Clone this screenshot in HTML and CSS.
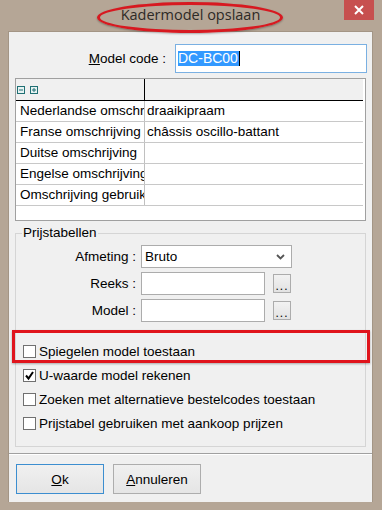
FILE: index.html
```html
<!DOCTYPE html>
<html lang="nl">
<head>
    <meta charset="UTF-8">
    <meta name="viewport" content="width=device-width, initial-scale=1.0">
    <title>Kadermodel opslaan</title>
    <link rel="stylesheet" href="styles.css">
</head>
<body>
    <div class="window">
        <div class="titlebar">
            <span></span>
            <span class="title">Kadermodel opslaan</span>
            <button class="close" aria-label="Sluiten">
                <svg width="10" height="10" viewBox="0 0 10 10"><path d="M1 1 L9 9 M9 1 L1 9" stroke="#fff" stroke-width="2"/></svg>
            </button>
        </div>
        <div class="client">
            <div class="code-row">
                <label class="code-label"><u>M</u>odel code :</label>
                <div class="code-input"><span class="selected">DC-BC00</span><span class="caret"></span></div>
            </div>

            <div class="grid">
                <div class="grid-head">
                    <div class="cell first">
                        <svg class="tree-icon" width="8" height="8" viewBox="0 0 8 8"><rect x="0.5" y="0.5" width="7" height="7" fill="#e6f2f2" stroke="#1f6f73"/><path d="M2 4 H6" stroke="#1f6f73"/></svg>
                        <svg class="tree-icon" width="8" height="8" viewBox="0 0 8 8"><rect x="0.5" y="0.5" width="7" height="7" fill="#e6f2f2" stroke="#1f6f73"/><path d="M2 4 H6 M4 2 V6" stroke="#1f6f73"/></svg>
                    </div>
                    <div class="cell"></div>
                </div>
                <div class="grid-row"><div class="cell first">Nederlandse omschrijving</div><div class="cell">draaikipraam</div></div>
                <div class="grid-row"><div class="cell first">Franse omschrijving</div><div class="cell">châssis oscillo-battant</div></div>
                <div class="grid-row"><div class="cell first">Duitse omschrijving</div><div class="cell"></div></div>
                <div class="grid-row"><div class="cell first">Engelse omschrijving</div><div class="cell"></div></div>
                <div class="grid-row"><div class="cell first">Omschrijving gebruiker</div><div class="cell"></div></div>
            </div>

            <fieldset class="group">
                <legend>Prijstabellen</legend>
                <div class="fields">
                    <label class="field-label">Afmeting :</label>
                    <div class="select">
                        <span>Bruto</span>
                        <svg width="9" height="6" viewBox="0 0 9 6"><path d="M1 1 L4.5 4.5 L8 1" fill="none" stroke="#555" stroke-width="1.8"/></svg>
                    </div>

                    <label class="field-label">Reeks :</label>
                    <div class="text-input"></div>
                    <button class="dots">...</button>

                    <label class="field-label">Model :</label>
                    <div class="text-input"></div>
                    <button class="dots">...</button>
                </div>

                <div class="checks">
                    <label class="check"><span class="box"></span>Spiegelen model toestaan</label>
                    <label class="check"><span class="box"><svg width="11" height="11" viewBox="0 0 11 11"><path d="M2 5.5 L4.5 8.5 L9 2" fill="none" stroke="#000" stroke-width="2"/></svg></span>U-waarde model rekenen</label>
                    <label class="check"><span class="box"></span>Zoeken met alternatieve bestelcodes toestaan</label>
                    <label class="check"><span class="box"></span>Prijstabel gebruiken met aankoop prijzen</label>
                </div>
            </fieldset>

            <div class="separator"></div>

            <div class="actions">
                <button class="btn default"><u>O</u>k</button>
                <button class="btn"><u>A</u>nnuleren</button>
            </div>
        </div>

        <!-- annotations drawn on top of the screenshot -->
        <div class="mark-ellipse"></div>
        <div class="mark-box"></div>
    </div>
</body>
</html>
```

FILE: styles.css
```css
/* Page */
body {
    margin: 0;
    font-family: 'Liberation Sans', Arial, sans-serif;
    font-size: 13.5px;
    color: #000;
}

/* Window frame */
.window {
    position: relative;
    width: 382px;
    height: 510px;
    box-sizing: border-box;
    padding: 0 9px 8px 8px;
    background-color: #b5a696; /* Win8 tan frame */
    display: flex;
    flex-direction: column;
}

.titlebar {
    height: 31px;
    display: grid;
    grid-template-columns: 1fr auto 1fr;
    align-items: start;
}

.title {
    font-family: 'Open Sans', 'Noto Sans', sans-serif;
    font-size: 14.5px;
    color: #2e2a26;
    line-height: 30px;
}

.close {
    justify-self: end;
    width: 30px;
    height: 20px;
    margin-right: -1px;
    border: none;
    padding: 0;
    background-color: #c7504f;
    display: flex;
    align-items: center;
    justify-content: center;
}

/* Client area */
.client {
    flex: 1;
    background-color: #f0f0f0;
    border: 1px solid #a39585;
    border-bottom: none;
    padding: 12px 6px 0 6px;
    display: flex;
    flex-direction: column;
}

.code-row {
    display: flex;
    align-items: center;
    height: 29px;
    gap: 9px;
    margin-right: -1px;
}

.code-label {
    width: 151px;
    text-align: right;
}

.code-input {
    flex: 1;
    height: 29px;
    box-sizing: border-box;
    border: 1px solid #7ab0e2;
    background: #fff;
    display: flex;
    align-items: center;
    padding-left: 2px;
    font-size: 14px;
}

.selected {
    background-color: #3399ff;
    color: #fff;
    line-height: 15px;
    padding-right: 1px;
}

.caret {
    width: 1px;
    height: 15px;
    background: #000;
}

/* Description grid */
.grid {
    margin-top: 5px;
    height: 143px;
    box-sizing: border-box;
    border: 1px solid #a0a0a0;
    background: #fff;
}

.grid-head,
.grid-row {
    display: grid;
    grid-template-columns: 129px 1fr;
    margin-right: 2px;
}

.grid-head {
    height: 21px;
    background-color: #f0f0f0;
    border-bottom: 1px solid #000;
}

.grid-head .cell.first {
    border-right: 1px solid #000;
    display: flex;
    align-items: center;
    gap: 5px;
    padding-left: 1px;
}

.grid-row {
    height: 20px;
    border-bottom: 1px solid #c8c8c8;
}

.cell {
    white-space: nowrap;
    overflow: hidden;
    line-height: 20px;
    padding-left: 2px;
}

.cell.first {
    padding-left: 4px;
    border-right: 1px solid #c0c0c0;
}

/* Group box */
.group {
    margin: 4px 0 0 0;
    padding: 0 0 11px 0;
    border: 1px solid #d5d5d5;
    min-width: 0;
}

.group legend {
    margin-left: 6px;
    padding: 0 1px;
    line-height: 16px;
}

.fields {
    display: grid;
    grid-template-columns: 120px 124px 17px;
    column-gap: 5px;
    row-gap: 4px;
    margin-top: 4px;
    align-items: center;
}

.field-label {
    text-align: right;
}

.select {
    grid-column: span 2;
    width: 151px;
    height: 23px;
    box-sizing: border-box;
    border: 1px solid #acacac;
    background: #fff;
    display: flex;
    align-items: center;
    justify-content: space-between;
    padding: 0 6px 0 3px;
}

.text-input {
    height: 23px;
    box-sizing: border-box;
    border: 1px solid #acacac;
    background: #fff;
}

.dots {
    margin-left: 3px;
    width: 18px;
    height: 19px;
    padding: 0;
    border: 1px solid #acacac;
    background: linear-gradient(#f2f2f2, #e2e2e2);
    font-size: 12px;
    line-height: 22px;
    letter-spacing: 1px;
    color: #000;
}

.checks {
    margin-top: 17px;
    display: flex;
    flex-direction: column;
}

.check {
    height: 24px;
    display: flex;
    align-items: center;
    gap: 3px;
    padding-left: 7px;
}

.box {
    width: 13px;
    height: 13px;
    box-sizing: border-box;
    border: 1px solid #707070;
    background: #fff;
    display: flex;
    align-items: center;
    justify-content: center;
}

/* Bottom buttons */
.separator {
    margin-top: 6px;
    margin-left: -6px;
    margin-right: -6px;
    height: 1px;
    border-top: 1px solid #a0a0a0;
    background: #fff;
}

.actions {
    display: flex;
    gap: 9px;
    margin-top: 9px;
    padding-left: 1px;
}

.btn {
    width: 88px;
    height: 30px;
    border: 1px solid #adadad;
    background: linear-gradient(#f0f0f0, #e5e5e5);
    font-family: 'Liberation Sans', Arial, sans-serif;
    font-size: 13.5px;
    color: #000;
}

.btn.default {
    border-color: #3c8ed0;
}

/* Red annotations */
.mark-ellipse {
    position: absolute;
    left: 97px;
    top: 2px;
    width: 186px;
    height: 31px;
    box-sizing: border-box;
    border: 3px solid #d71920;
    border-radius: 50%;
    box-shadow: 0 1px 2px rgba(0, 0, 0, 0.3);
}

.mark-box {
    position: absolute;
    left: 12px;
    top: 330px;
    width: 358px;
    height: 33px;
    box-sizing: border-box;
    border: 3px solid #e0141c;
    box-shadow: 0 1px 2px rgba(0, 0, 0, 0.3);
}
```
